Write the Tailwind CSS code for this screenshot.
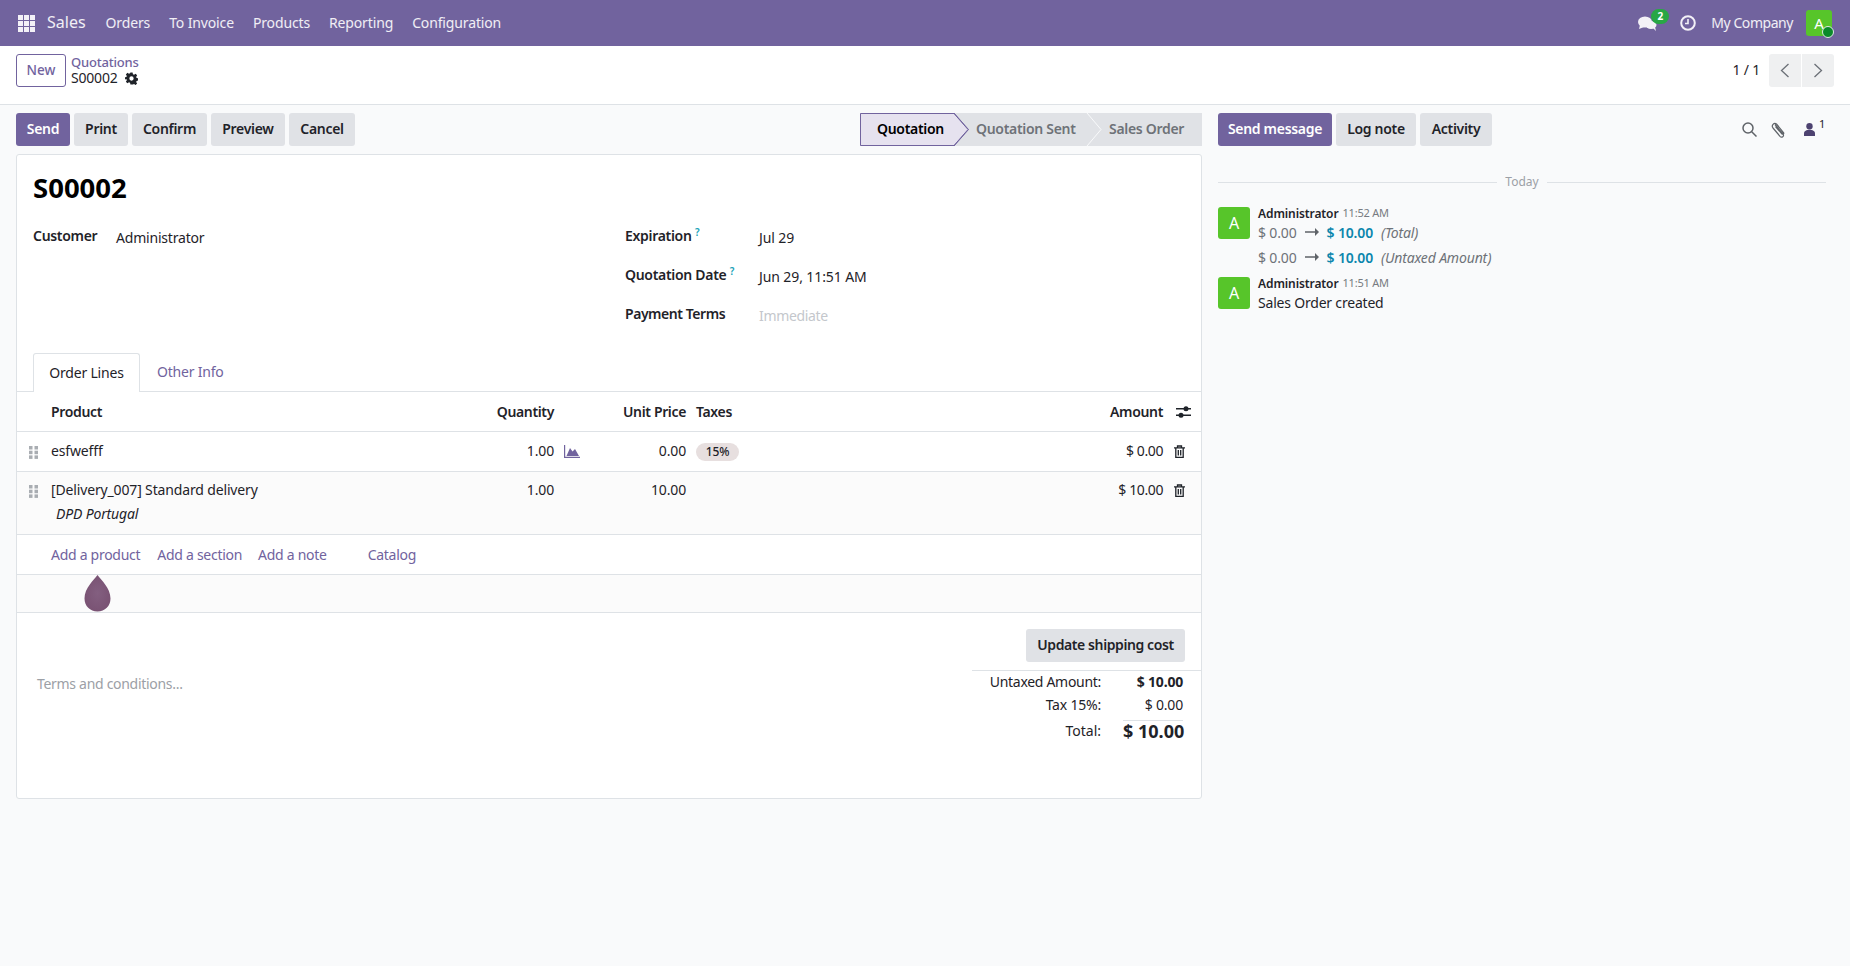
<!DOCTYPE html>
<html lang="en"><head><meta charset="utf-8"><title>S00002</title>
<script src="https://cdn.jsdelivr.net/npm/@tailwindcss/browser@4"></script></head>
<body class="m-0 h-[966px] w-[1850px] overflow-hidden bg-[#f9fafb] font-['Noto_Sans',sans-serif] text-[14px] text-[#1f2329]">
<nav class="flex h-[46px] items-center bg-[#71639e] text-white/90">
  <svg class="ml-[18px] h-[17px] w-[17px]" viewBox="0 0 17 17" fill="#f3f1f7"><rect width="5" height="5"/><rect x="6" width="5" height="5"/><rect x="12" width="5" height="5"/><rect y="6" width="5" height="5"/><rect x="6" y="6" width="5" height="5"/><rect x="12" y="6" width="5" height="5"/><rect y="12" width="5" height="5"/><rect x="6" y="12" width="5" height="5"/><rect x="12" y="12" width="5" height="5"/></svg>
  <span class="ml-[12px] pb-[2px] text-[16px]">Sales</span>
  <div class="ml-[20px] flex gap-[19px] pb-[2px] tracking-[-0.14px]"><span>Orders</span><span>To Invoice</span><span>Products</span><span>Reporting</span><span>Configuration</span></div>
  <div class="ml-auto flex items-center">
    <div class="relative h-[20px] w-[31px]">
      <svg class="absolute left-0 top-[3px] h-[16px] w-[19px]" viewBox="0 0 19 16" fill="#f3f1f7"><ellipse cx="7" cy="6" rx="7" ry="5.5"/><path d="M2 9l-1 4 5-2zM9 12h6l3 3-1-4-8 0z"/><ellipse cx="13" cy="9" rx="5.5" ry="4"/></svg>
      <span class="absolute left-[13px] top-[-4px] flex h-[15px] w-[18px] items-center justify-center rounded-full bg-[#28a745] text-[10px] font-bold text-white">2</span>
    </div>
    <svg class="ml-[11px] h-[16px] w-[16px]" viewBox="0 0 16 16" fill="none" stroke="#f3f1f7"><circle cx="8" cy="8" r="6.8" stroke-width="2"/><path d="M8 4v4.5H5" stroke-width="1.6"/></svg>
    <span class="ml-[15px] pb-[2px] tracking-[-0.45px]">My Company</span>
    <div class="relative ml-[13px] mr-[18px] flex h-[26px] w-[26px] items-center justify-center rounded-[3px] bg-[#57c52a] text-[15px] text-white">A
      <span class="absolute bottom-[-2px] right-[-2px] h-[12px] w-[12px] rounded-full border border-[#dfe8e4] bg-[#0b8a2a]"></span>
    </div>
  </div>
</nav>
<header class="flex h-[59px] items-start border-b border-[#dee2e6] bg-white px-[16px] pt-[8px]">
  <button class="h-[33px] w-[50px] rounded-[3px] border border-[#71639e] bg-white pb-[1px] font-medium text-[13.5px] text-[#71639e]">New</button>
  <div class="ml-[5px] leading-[16px]">
    <div class="text-[13px] font-medium text-[#71639e] tracking-[-0.2px]">Quotations</div>
    <div class="flex items-center gap-[7px] text-[14px] tracking-[-0.2px]">S00002
      <svg class="h-[13px] w-[13px]" viewBox="0 0 24 24" fill="#1f2329"><path fill-rule="evenodd" d="M10 1h4l.7 3.2 2 .9 2.8-1.8 2.9 2.9-1.8 2.8.9 2 3.2.7v4l-3.2.7-.9 2 1.800 2.800-2.900 2.900-2.800-1.800-2 .9L14 23h-4l-.7-3.200-2-.9-2.800 1.800-2.900-2.900 1.800-2.800-.9-2L-.7 14v-4l3.200-.7.9-2-1.800-2.800 2.900-2.900 2.800 1.800 2-.9zM12 8a4 4 0 1 0 0 8 4 4 0 0 0 0-8z"/></svg>
    </div>
  </div>
  <div class="ml-auto flex items-center">
    <span class="mr-[9px] pb-[2px] tracking-[-0.2px]">1 / 1</span>
    <div class="flex h-[33px] w-[32px] items-center justify-center rounded-l-[3px] bg-[#eff0f1]"><svg class="h-[15px] w-[10px]" viewBox="0 0 10 15" fill="none" stroke="#6b7077" stroke-width="1.300"><path d="M8.500 1L1.500 7.500l7 6.500"/></svg></div>
    <div class="ml-[1px] flex h-[33px] w-[32px] items-center justify-center rounded-r-[3px] bg-[#eff0f1]"><svg class="h-[15px] w-[10px]" viewBox="0 0 10 15" fill="none" stroke="#6b7077" stroke-width="1.300"><path d="M1.500 1l7 6.500-7 6.500"/></svg></div>
  </div>
</header>
<main class="flex pl-[16px]">
  <section class="w-[1186px]">
    <div class="flex h-[49px] items-center">
      <div class="flex gap-[4px] text-[14px] font-semibold tracking-[-0.3px]">
        <button class="h-[33px] w-[54px] rounded-[3px] bg-[#71639e] pb-[2px] text-white">Send</button>
        <button class="h-[33px] w-[54px] rounded-[3px] bg-[#e0e2e6] pb-[2px]">Print</button>
        <button class="h-[33px] w-[75px] rounded-[3px] bg-[#e0e2e6] pb-[2px]">Confirm</button>
        <button class="h-[33px] w-[74px] rounded-[3px] bg-[#e0e2e6] pb-[2px]">Preview</button>
        <button class="h-[33px] w-[66px] rounded-[3px] bg-[#e0e2e6] pb-[2px]">Cancel</button>
      </div>
      <div class="relative ml-auto flex h-[33px] w-[342px] items-center pb-[2px] font-semibold tracking-[-0.3px]">
        <svg class="absolute inset-0" width="342" height="33" viewBox="0 0 342 33"><rect width="342" height="33" fill="#e0e2e6"/><path d="M.5.5H94L108 16.500 94 32.500H.5z" fill="#e6e2ef" stroke="#71639e"/><path d="M94 0l14.500 16.500L94 33" fill="none" stroke="#71639e"/><path d="M227 0l14 16.500L227 33" fill="none" stroke="#f9fafb"/></svg>
        <span class="relative ml-[17px] w-[91px] text-black">Quotation</span>
        <span class="relative ml-[8px] w-[125px] text-[#6e7278]">Quotation Sent</span>
        <span class="relative ml-[8px] text-[#6e7278]">Sales Order</span>
      </div>
    </div>
    <div class="h-[645px] rounded-[3px] border border-[#dee2e6] bg-white">
      <h1 class="pl-[16px] pt-[14px] text-[27.5px] font-bold leading-[38px] text-black">S00002</h1>
      <div class="flex h-[146px] pt-[18px]">
        <div class="w-[592px] pl-[16px]"><div class="flex items-start"><span class="w-[83px] font-semibold tracking-[-0.3px]">Customer</span><span class="mt-[2px] tracking-[-0.2px]">Administrator</span></div></div>
        <div class="ml-[16px] flex flex-col gap-[19px]">
          <div class="flex h-[20px]"><span class="w-[134px] font-semibold tracking-[-0.3px]">Expiration <sup class="font-semibold text-[10px] text-[#17a2b8]">?</sup></span><span class="mt-[2px] tracking-[-0.1px]">Jul 29</span></div>
          <div class="flex h-[20px]"><span class="w-[134px] font-semibold tracking-[-0.3px]">Quotation Date <sup class="font-semibold text-[10px] text-[#17a2b8]">?</sup></span><span class="mt-[2px] tracking-[-0.1px]">Jun 29, 11:51 AM</span></div>
          <div class="flex h-[20px]"><span class="w-[134px] font-semibold tracking-[-0.45px]">Payment Terms</span><span class="mt-[2px] text-[#c4c7cc] tracking-[-0.35px]">Immediate</span></div>
        </div>
      </div>
      <div class="flex h-[39px] border-b border-[#dee2e6] pl-[16px]">
        <div class="flex h-[39px] w-[107px] items-center justify-center rounded-t-[3px] border border-b-0 border-[#dee2e6] bg-white pb-[2px] tracking-[-0.2px]">Order Lines</div>
        <div class="ml-[17px] flex items-center pb-[2px] text-[#71639e] tracking-[-0.2px]">Other Info</div>
      </div>
      <div class="flex h-[40px] items-center border-b border-[#dee2e6] font-semibold tracking-[-0.35px]">
        <span class="w-[34px]"></span><span class="w-[400px] pb-[1px]">Product</span><span class="w-[103px] pb-[1px] text-right">Quantity</span><span class="w-[42px]"></span><span class="w-[90px] pb-[1px] text-right">Unit Price</span><span class="ml-[10px] w-[60px] pb-[1px]">Taxes</span><span class="ml-auto pb-[1px]">Amount</span>
        <svg class="ml-[13px] mr-[10px] h-[14px] w-[15px]" viewBox="0 0 15 14" fill="#1f2329"><rect y="3" width="15" height="1.500"/><circle cx="10" cy="3.700" r="2.500"/><rect y="9.500" width="15" height="1.500"/><circle cx="5" cy="10.200" r="2.500"/></svg>
      </div>
      <div class="flex h-[40px] items-center border-b border-[#dee2e6] tracking-[-0.15px]">
        <span class="flex w-[33px] justify-center pt-[2px]"><svg class="h-[13px] w-[9px]" viewBox="0 0 9 13" fill="#a9adb2"><rect width="3.500" height="3.500"/><rect x="5.500" width="3.500" height="3.500"/><rect y="4.700" width="3.500" height="3.500"/><rect x="5.500" y="4.700" width="3.500" height="3.500"/><rect y="9.400" width="3.500" height="3.500"/><rect x="5.500" y="9.400" width="3.500" height="3.500"/></svg></span>
        <span class="ml-[1px] w-[400px] pb-[2px]">esfwefff</span><span class="w-[103px] pb-[2px] text-right">1.00</span>
        <span class="flex w-[42px] pl-[10px]"><svg class="h-[13px] w-[16px]" viewBox="0 0 16 13" fill="#71639e"><path d="M0 0h1.200v11.800H16V13H0z"/><path d="M2.500 11L6 3l2.500 3.500L11 4l4 7z"/></svg></span>
        <span class="w-[90px] pb-[2px] text-right">0.00</span>
        <span class="ml-[10px] flex h-[18px] w-[43px] items-center justify-center rounded-full bg-[#e7dfdf] text-[12px] font-medium">15%</span>
        <span class="ml-auto pb-[2px] tracking-[-0.4px]">$ 0.00</span>
        <svg class="ml-[11px] mr-[16px] h-[13px] w-[11px]" viewBox="0 0 11 13" fill="none" stroke="#1f2329" stroke-width="1.300"><path d="M0 2.800h11M3.500 2.500V1h4v1.500M1.800 3v9.300h7.400V3M4.300 5v5.500M6.700 5v5.500"/></svg>
      </div>
      <div class="flex h-[63px] border-b border-[#dee2e6] bg-[#fbfbfb] pt-[7px] tracking-[-0.15px]">
        <span class="flex h-[24px] w-[33px] items-center justify-center"><svg class="h-[13px] w-[9px]" viewBox="0 0 9 13" fill="#a9adb2"><rect width="3.500" height="3.500"/><rect x="5.500" width="3.500" height="3.500"/><rect y="4.700" width="3.500" height="3.500"/><rect x="5.500" y="4.700" width="3.500" height="3.500"/><rect y="9.400" width="3.500" height="3.500"/><rect x="5.500" y="9.400" width="3.500" height="3.500"/></svg></span>
        <div class="ml-[1px] w-[400px]"><div>[Delivery_007] Standard delivery</div><div class="mt-[3px] pl-[5px] italic">DPD Portugal</div></div>
        <span class="w-[103px] text-right">1.00</span><span class="w-[42px]"></span><span class="w-[90px] text-right">10.00</span>
        <span class="ml-auto tracking-[-0.4px]">$ 10.00</span>
        <svg class="ml-[11px] mr-[16px] mt-[5px] h-[13px] w-[11px]" viewBox="0 0 11 13" fill="none" stroke="#1f2329" stroke-width="1.300"><path d="M0 2.800h11M3.500 2.500V1h4v1.500M1.800 3v9.300h7.400V3M4.300 5v5.500M6.700 5v5.500"/></svg>
      </div>
      <div class="flex h-[40px] items-center border-b border-[#dee2e6] pb-[1px] pl-[34px] text-[#71639e] tracking-[-0.28px]">
        <span>Add a product</span><span class="ml-[17px]">Add a section</span><span class="ml-[16px]">Add a note</span><span class="ml-[41px]">Catalog</span>
      </div>
      <div class="flex h-[38px] items-start border-b border-[#dee2e6] bg-[#fbfbfb] pl-[67px]">
        <svg class="h-[37px] w-[27px]" viewBox="0 0 27 37"><defs><radialGradient id="d"><stop offset="0" stop-color="#835f80"/><stop offset="1" stop-color="#7a5374"/></radialGradient></defs><path d="M13.500 0C17 5 26.500 13 26.500 23.500 26.500 31 21 36.500 13.500 36.500S.5 31 .5 23.500C.5 13 10 5 13.500 0z" fill="url(#d)"/></svg>
      </div>
      <div class="flex items-start justify-between">
        <div class="pl-[20px] pt-[60px] text-[#9ca0a6] tracking-[-0.3px]">Terms and conditions...</div>
        <div class="w-[229px]">
          <div class="flex justify-end pr-[16px] pt-[16px]"><button class="h-[33px] w-[159px] rounded-[3px] bg-[#e0e2e6] pb-[2px] font-semibold tracking-[-0.4px]">Update shipping cost</button></div>
          <div class="mt-[8px] border-t border-[#dee2e6] pr-[18px]">
            <div class="flex h-[22px] items-center justify-end pb-[2px]"><span class="tracking-[-0.3px]">Untaxed Amount:</span><span class="w-[82px] text-right font-bold tracking-[-0.2px]">$ 10.00</span></div>
            <div class="mb-[4px] flex h-[23px] items-center justify-end pb-[1px]"><span class="tracking-[-0.2px]">Tax 15%:</span><span class="w-[82px] text-right tracking-[-0.2px]">$ 0.00</span></div>
            <div class="flex justify-end"><span>Total:</span><span class="ml-[22px] w-[60px] border-t border-[#dee2e6] text-right text-[18px] font-bold leading-[21px] whitespace-nowrap">$ 10.00</span></div>
          </div>
        </div>
      </div>
    </div>
  </section>
  <aside class="ml-[16px] w-[616px]">
    <div class="flex h-[49px] items-center font-semibold tracking-[-0.3px]">
      <button class="h-[33px] w-[114px] rounded-[3px] bg-[#71639e] pb-[2px] text-white">Send message</button>
      <button class="ml-[4px] h-[33px] w-[80px] rounded-[3px] bg-[#e0e2e6] pb-[2px]">Log note</button>
      <button class="ml-[4px] h-[33px] w-[72px] rounded-[3px] bg-[#e0e2e6] pb-[2px]">Activity</button>
      <svg class="ml-[250px] h-[15px] w-[15px]" viewBox="0 0 15 15" fill="none" stroke="#5f6368" stroke-width="1.500"><circle cx="6" cy="6" r="5"/><path d="M9.700 9.700L14.500 14.500"/></svg>
      <svg class="ml-[14px] h-[16px] w-[16px]" viewBox="0 0 16 16" fill="none" stroke="#5f6368" stroke-width="1.200"><path d="M4 2.500l8 9.500c1.700 2.200-1.300 4.200-3 2.300L2 6C0 3.500 3 0 5.500 2l7 8.500c.8 1.200-.7 2.300-1.700 1.300L4.500 4.500"/></svg>
      <svg class="ml-[17px] h-[13px] w-[11px]" viewBox="0 0 11 13" fill="#4d4270"><circle cx="5.500" cy="3.300" r="3.200"/><path d="M0 13v-2.500C0 8 2.500 6.800 5.500 6.800S11 8 11 10.500V13z"/></svg>
      <span class="mb-[10px] ml-[4px] text-[11px] font-normal">1</span>
    </div>
    <div class="mt-[16px] flex h-[20px] w-[608px] items-center pt-[3px] text-[12px] font-normal text-[#9ca0a6]"><span class="mt-[1px] h-px flex-1 bg-[#dee2e6]"></span><span class="mx-[8px]">Today</span><span class="mt-[1px] h-px flex-1 bg-[#dee2e6]"></span></div>
    <div class="mt-[17px] flex">
      <div class="flex h-[32px] w-[32px] items-center justify-center rounded-[3px] bg-[#57c52a] text-[16px] text-white">A</div>
      <div class="ml-[8px]">
        <div class="flex h-[13px] items-center"><span class="text-[12px] font-semibold tracking-[-0.1px]">Administrator</span><span class="ml-[4px] text-[11px] text-[#777b81] tracking-[-0.2px]">11:52 AM</span></div>
        <div class="mt-[2px] flex h-[20px] items-center gap-[8px] tracking-[-0.15px] text-[#6e7278]"><span>$ 0.00</span><svg class="h-[8px] w-[14px]" viewBox="0 0 14 8" fill="#5f6368"><path d="M0 3.200h10V0l4 4-4 4V4.800H0z"/></svg><span class="font-semibold text-[#0c86ad]">$ 10.00</span><span class="italic">(Total)</span></div>
        <div class="mt-[5px] flex h-[20px] items-center gap-[8px] tracking-[-0.15px] text-[#6e7278]"><span>$ 0.00</span><svg class="h-[8px] w-[14px]" viewBox="0 0 14 8" fill="#5f6368"><path d="M0 3.200h10V0l4 4-4 4V4.800H0z"/></svg><span class="font-semibold text-[#0c86ad]">$ 10.00</span><span class="italic">(Untaxed Amount)</span></div>
      </div>
    </div>
    <div class="mt-[10px] flex">
      <div class="flex h-[32px] w-[32px] items-center justify-center rounded-[3px] bg-[#57c52a] text-[16px] text-white">A</div>
      <div class="ml-[8px]">
        <div class="flex h-[13px] items-center"><span class="text-[12px] font-semibold tracking-[-0.1px]">Administrator</span><span class="ml-[4px] text-[11px] text-[#777b81] tracking-[-0.2px]">11:51 AM</span></div>
        <div class="mt-[2px] tracking-[-0.2px]">Sales Order created</div>
      </div>
    </div>
  </aside>
</main>
</body></html>
